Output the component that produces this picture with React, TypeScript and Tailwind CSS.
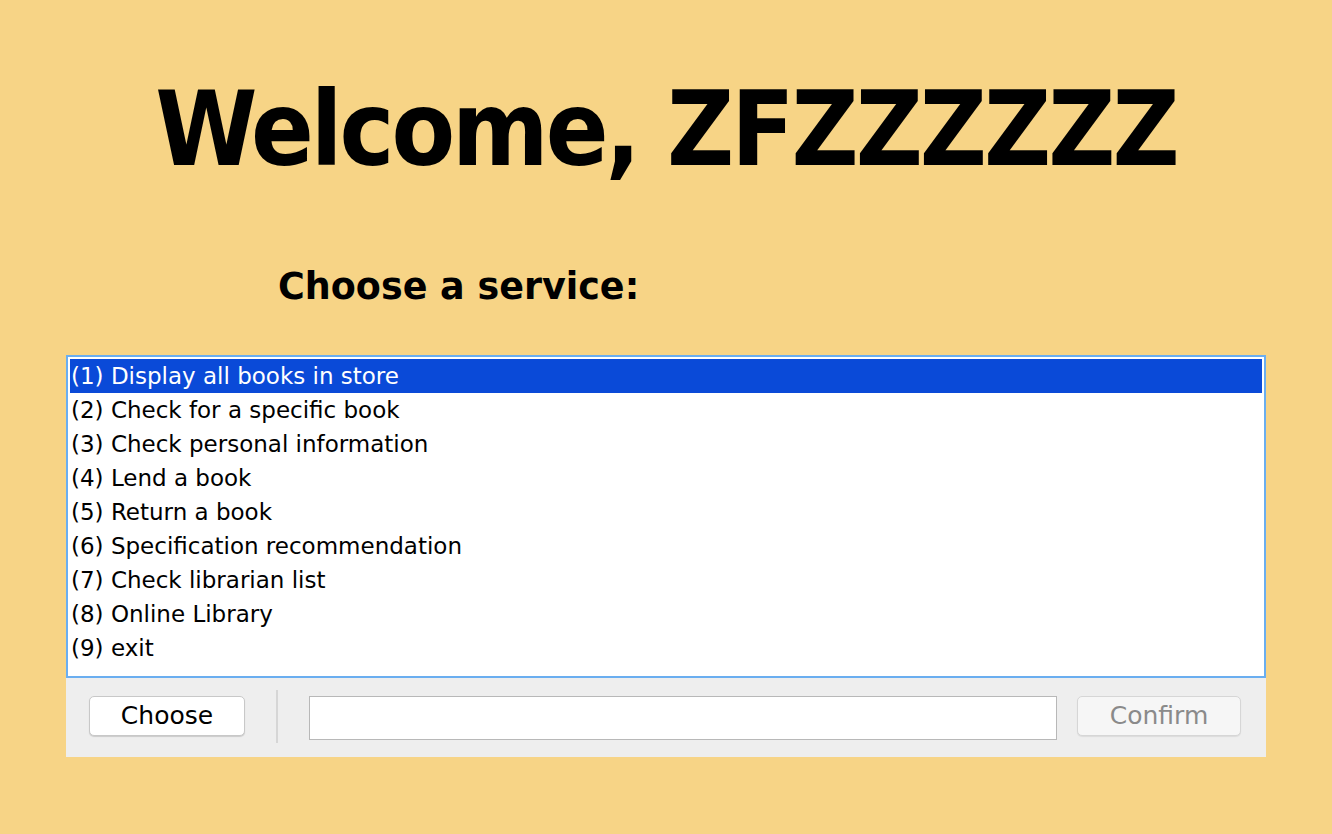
const SERVICES = [
  '(1) Display all books in store',
  '(2) Check for a specific book',
  '(3) Check personal information',
  '(4) Lend a book',
  '(5) Return a book',
  '(6) Specification recommendation',
  '(7) Check librarian list',
  '(8) Online Library',
  '(9) exit',
];

const font = "font-['DejaVu_Sans',sans-serif]";

export default function App() {
  return (
    <div className={`h-[834px] w-[1332px] bg-[#f7d486] text-black ${font}`}>
      <div className="flex flex-col">
        <h1 className="pt-[67px] text-center font-['DejaVu_Sans_Condensed','DejaVu_Sans',sans-serif] text-[103px] leading-[124px] font-bold tracking-[-3px]">
          Welcome, ZFZZZZZZ
        </h1>
        <h2 className="pl-[278px] pt-[74px] text-[36.5px] leading-[44px] font-bold">Choose a service:</h2>
      </div>
      <div className="mx-[66px] mt-[46px]">
        <ul className="border-2 border-[#6aaef0] bg-white p-[2px] pb-[11px]">
          {SERVICES.map((s, i) => (
            <li
              key={s}
              className={`h-[34px] pl-[1px] text-[23px] leading-[35px] ${
                i === 0 ? 'bg-[#0a4ad8] text-white' : 'text-black'
              }`}
            >
              {s}
            </li>
          ))}
        </ul>
        <div className="flex h-[79px] items-start bg-[#eeeeee] pl-[23px] pr-[25px] pt-[18px]">
          <button className="h-[40px] w-[156px] rounded-[5px] border border-[#c8c8c8] bg-white text-[25px] text-black shadow-[0_1px_1px_rgba(0,0,0,0.15)]">
            Choose
          </button>
          <div className="mx-[31px] -mt-[6px] h-[53px] w-[2px] bg-[#d6d6d6]" />
          <input className="h-[44px] flex-1 border border-[#b8b8b8] bg-white outline-none" />
          <button className="ml-[20px] h-[40px] w-[164px] rounded-[5px] border border-[#d6d6d6] bg-[#f6f6f6] text-[25px] text-[#8a8a8a] shadow-[0_1px_1px_rgba(0,0,0,0.08)]">
            Confirm
          </button>
        </div>
      </div>
    </div>
  );
}
